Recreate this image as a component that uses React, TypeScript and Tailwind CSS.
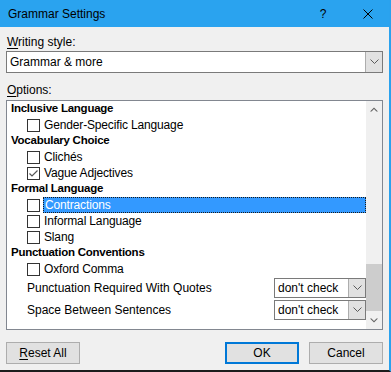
const FONT = "font-['Liberation_Sans',Arial,sans-serif]";

function Chevron({ className = "" }: { className?: string }) {
  return (
    <svg width="9" height="6" viewBox="0 0 9 6" className={className}>
      <polyline points="0.5,0.5 4.5,4.5 8.5,0.5" fill="none" stroke="#5a5a5a" strokeWidth="1" />
    </svg>
  );
}

function Check({ checked }: { checked?: boolean }) {
  return (
    <div className="w-[13px] h-[13px] border border-[#333333] bg-white shrink-0 flex items-center justify-center">
      {checked && (
        <svg width="11" height="11" viewBox="0 0 11 11">
          <polyline points="1.5,5.5 4,8 9.5,2.5" fill="none" stroke="#555555" strokeWidth="1.2" />
        </svg>
      )}
    </div>
  );
}

function Header({ text }: { text: string }) {
  return (
    <div className="h-[16px] flex items-center pl-[4px] font-bold text-[11.5px] tracking-[-0.25px]">
      {text}
    </div>
  );
}

function Item({ text, checked, selected }: { text: string; checked?: boolean; selected?: boolean }) {
  return (
    <div className="h-[16px] flex items-center pl-[20px] tracking-[-0.15px]">
      <Check checked={checked} />
      {selected ? (
        <div className="ml-[3px] flex-1 h-[16px] bg-[#3399ff] text-white pl-[1px] flex items-center border border-dotted border-[#1a1a1a]">
          {text}
        </div>
      ) : (
        <span className="ml-[4px]">{text}</span>
      )}
    </div>
  );
}

function SmallSelect({ label }: { label: string }) {
  return (
    <div className="h-[22px] flex items-center pl-[20px]">
      <span className="flex-1">{label}</span>
      <div className="w-[92px] h-[20px] border border-[#7a7a7a] bg-white flex">
        <span className="flex-1 pl-[3px] leading-[18px]">don't check</span>
        <div className="w-[17px] bg-[#e1e1e1] border-l border-[#adadad] flex items-center justify-center">
          <Chevron />
        </div>
      </div>
    </div>
  );
}

function Button({ children, primary }: { children: React.ReactNode; primary?: boolean }) {
  return (
    <div
      className={
        "h-[22px] bg-[#e1e1e1] flex items-center justify-center " +
        (primary ? "w-[74px] border-2 border-[#0078d7]" : "w-[74px] border border-[#adadad]")
      }
    >
      {children}
    </div>
  );
}

export default function App() {
  return (
    <div className={`w-[391px] h-[372px] bg-[#f0f0f0] flex flex-col border-r-2 border-b-2 border-r-[#2aa2ee] border-b-[#1c1c1c] text-[12px] text-black ${FONT}`}>
      {/* Title bar */}
      <div className="h-[27px] bg-[#2aa3ef] flex items-center shrink-0">
        <span className="pl-[8px] flex-1">Grammar Settings</span>
        <span className="w-[12px] text-center mr-[34px]">?</span>
        <svg width="10" height="10" viewBox="0 0 10 10" className="mr-[16px]">
          <path d="M0.5 0.5 L9.5 9.5 M9.5 0.5 L0.5 9.5" stroke="#000" strokeWidth="1" />
        </svg>
      </div>

      <div className="pl-[6px] pr-[6px] flex flex-col">
        <div className="mt-[7px] h-[16px] leading-[16px] pl-[1px]">
          <span className="underline underline-offset-2">W</span>riting style:
        </div>
        <div className="mt-[1px] h-[22px] border border-[#7a7a7a] bg-white flex">
          <span className="flex-1 pl-[3px] leading-[20px]">Grammar &amp; more</span>
          <div className="w-[17px] bg-[#e1e1e1] border-l border-[#adadad] flex items-center justify-center">
            <Chevron />
          </div>
        </div>

        <div className="mt-[9px] h-[16px] leading-[16px] pl-[1px]">
          <span className="underline underline-offset-2">O</span>ptions:
        </div>

        <div className="mt-[2px] h-[230px] border border-[#828790] bg-white flex">
          <div className="flex-1 flex flex-col">
            <Header text="Inclusive Language" />
            <Item text="Gender-Specific Language" />
            <Header text="Vocabulary Choice" />
            <Item text="Clichés" />
            <Item text="Vague Adjectives" checked />
            <Header text="Formal Language" />
            <Item text="Contractions" selected />
            <Item text="Informal Language" />
            <Item text="Slang" />
            <Header text="Punctuation Conventions" />
            <Item text="Oxford Comma" />
            <SmallSelect label="Punctuation Required With Quotes" />
            <SmallSelect label="Space Between Sentences" />
          </div>
          {/* Scrollbar */}
          <div className="w-[16px] bg-[#f0f0f0] flex flex-col">
            <div className="h-[17px] flex items-center justify-center">
              <svg width="8" height="5" viewBox="0 0 8 5">
                <path d="M0 4.5 L4 0.5 L8 4.5 L6.5 4.5 L4 2 L1.5 4.5 Z" fill="#606060" />
              </svg>
            </div>
            <div className="flex-1 flex flex-col justify-end">
              <div className="h-[47px] mb-[1px] bg-[#cdcdcd]" />
            </div>
            <div className="h-[17px] flex items-center justify-center">
              <svg width="8" height="5" viewBox="0 0 8 5">
                <path d="M0 0.5 L4 4.5 L8 0.5 L6.5 0.5 L4 3 L1.5 0.5 Z" fill="#606060" />
              </svg>
            </div>
          </div>
        </div>

        <div className="mt-[12px] flex">
          <Button>
            <span><span className="underline underline-offset-2">R</span>eset All</span>
          </Button>
          <div className="flex-1" />
          <Button primary>OK</Button>
          <div className="w-[10px]" />
          <Button>Cancel</Button>
        </div>
      </div>
    </div>
  );
}
